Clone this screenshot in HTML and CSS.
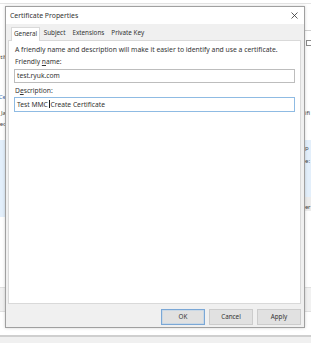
FILE: index.html
```html
<!DOCTYPE html>
<html>
<head>
<meta charset="utf-8">
<link rel="stylesheet" href="styles.css">
</head>
<body>
<div class="desk">
  <div class="bg-topline"></div>
  <div class="bg-rightline"></div>
  <div class="bg-check"></div>
  <div class="bg-blue-left"></div>
  <div class="bg-blue-right"></div>
  <div class="bg-gray-right"></div>
  <div class="bg-band"></div>
  <div class="bg-bottom"></div>
  <div class="clip clip-left">
    <span class="frag f1">tif</span>
    <span class="frag f2 link">Ce</span>
    <span class="frag f3">Ja</span>
    <span class="frag f4">ec</span>
  </div>
  <div class="clip clip-right">
    <span class="frag f5">ifi</span>
    <span class="frag f6">p</span>
    <span class="frag f7">e:</span>
    <span class="frag f8">er</span>
  </div>

  <div class="dialog">
    <div class="titlebar">
      <span class="title">Certificate Properties</span>
      <svg class="close" width="7" height="7" viewBox="0 0 7 7"><path d="M0.5 0.5 L6.5 6.5 M6.5 0.5 L0.5 6.5" stroke="#333" stroke-width="0.8" fill="none"/></svg>
    </div>
    <div class="body">
      <div class="tabs">
        <span class="tab active">General</span>
        <span class="tab">Subject</span>
        <span class="tab">Extensions</span>
        <span class="tab">Private Key</span>
      </div>
      <div class="panel">
        <p class="intro">A friendly name and description will make it easier to identify and use a certificate.</p>
        <div class="label">Friendly <u>n</u>ame:</div>
        <div class="input">test.ryuk.com</div>
        <div class="label">D<u>e</u>scription:</div>
        <div class="input focus">Test MMC <span class="caret"></span>Create Certificate</div>
      </div>
      <div class="buttons">
        <span class="btn default">OK</span>
        <span class="btn">Cancel</span>
        <span class="btn">Apply</span>
      </div>
    </div>
  </div>
</div>
</body>
</html>
```

FILE: styles.css
```css
* { box-sizing: border-box; }
html, body { margin: 0; padding: 0; }
body {
  width: 311px;
  height: 343px;
  overflow: hidden;
  background: #ffffff;
  font-family: "Noto Sans", "Open Sans", sans-serif;
  color: #333333;
}
.desk { position: relative; width: 311px; height: 343px; }

.bg-topline { position: absolute; left: 0; right: 0; top: 3px; height: 1px; background: #e4e4e4; }
.bg-rightline { position: absolute; left: 300px; right: 0; top: 30px; height: 1px; background: #cfcfcf; }
.bg-check { position: absolute; left: 306px; top: 40px; width: 6px; height: 6px; border: 1px solid #8a8a8a; background: #fff; }
.bg-blue-left { position: absolute; left: 0; width: 8px; top: 140px; height: 77px; background: #e3effb; }
.bg-blue-right { position: absolute; right: 0; width: 10px; top: 140px; height: 57px; background: #e3effb; }
.bg-gray-right { position: absolute; right: 0; width: 10px; top: 197px; height: 14px; background: #ececec; }
.bg-band { position: absolute; left: 0; right: 0; top: 287px; height: 25px; background: #f1f1f1; border-top: 1px solid #e0e0e0; border-bottom: 1px solid #e0e0e0; }
.bg-bottom { position: absolute; left: 0; right: 0; top: 335px; bottom: 0; background: #f0f0f0; border-top: 2px solid #cfcfcf; }

.clip { position: absolute; top: 0; height: 240px; overflow: hidden; }
.clip-left { left: 0; width: 5px; }
.clip-right { left: 304px; width: 7px; }
.frag { position: absolute; font-size: 6px; line-height: 8px; color: #444; white-space: nowrap; }
.frag.link { color: #3a6fb3; }
.f1 { right: -1px; top: 53px; }
.f2 { right: -1px; top: 93px; }
.f3 { right: -1px; top: 109px; }
.f4 { right: -1px; top: 120px; }
.f5 { left: 1px; top: 109px; }
.f6 { left: 1px; top: 144px; }
.f7 { left: 1px; top: 157px; }
.f8 { left: 1px; top: 203px; letter-spacing: -0.3px; }

.dialog {
  position: absolute;
  left: 5px;
  top: 6px;
  width: 300px;
  height: 322px;
  border: 1px solid #a0a0a0;
  background: #f0f0f0;
  box-shadow: 0 0 3px rgba(0, 0, 0, 0.18);
  display: flex;
  flex-direction: column;
}
.titlebar {
  height: 17px;
  background: #ffffff;
  display: flex;
  align-items: center;
  justify-content: space-between;
  padding: 0 6px 0 4px;
  flex: none;
}
.title { font-size: 6.9px; line-height: 9px; color: #333; }
.close { display: block; }

.body {
  flex: 1;
  display: flex;
  flex-direction: column;
  padding: 3px 3px 0 2px;
}
.tabs {
  display: flex;
  height: 13px;
  padding-left: 3px;
  font-size: 6.3px;
  line-height: 12px;
  flex: none;
}
.tab { padding: 0 3.5px; color: #333; }
.tab.active {
  background: #ffffff;
  border: 1px solid #d9d9d9;
  border-bottom: none;
  height: 14px;
  position: relative;
  z-index: 1;
  padding: 0 2px;
}
.panel {
  height: 264px;
  background: #ffffff;
  border: 1px solid #d9d9d9;
  padding: 4px 5px 0 5px;
  font-size: 6.7px;
  line-height: 9px;
  flex: none;
}
.intro { margin: 0 0 0 1px; white-space: nowrap; font-size: 6.8px; }
.label { margin: 3px 0 0 1px; }
.label u { text-decoration-thickness: 0.5px; text-underline-offset: 1px; }
.input {
  margin-top: 3px;
  height: 14px;
  border: 1px solid #bdbdbd;
  padding: 0 2px;
  line-height: 12px;
  white-space: nowrap;
}
.input.focus { border-color: #8fbbe3; height: 15px; line-height: 13px; }
.label + .input.focus { margin-top: 1.5px; }
.caret { display: inline-block; width: 0.6px; height: 8px; background: #222; vertical-align: -1.5px; margin-right: 0.5px; }

.buttons {
  display: flex;
  justify-content: flex-end;
  gap: 4px;
  margin-top: 5px;
}
.btn {
  width: 44px;
  height: 16px;
  background: #e1e1e1;
  border: 1px solid #cccccc;
  font-size: 6.3px;
  line-height: 14px;
  text-align: center;
  color: #333;
}
.btn.default { border: 1px solid #7aa7d6; box-shadow: inset 0 0 0 0.5px #b3cfea; }
```
